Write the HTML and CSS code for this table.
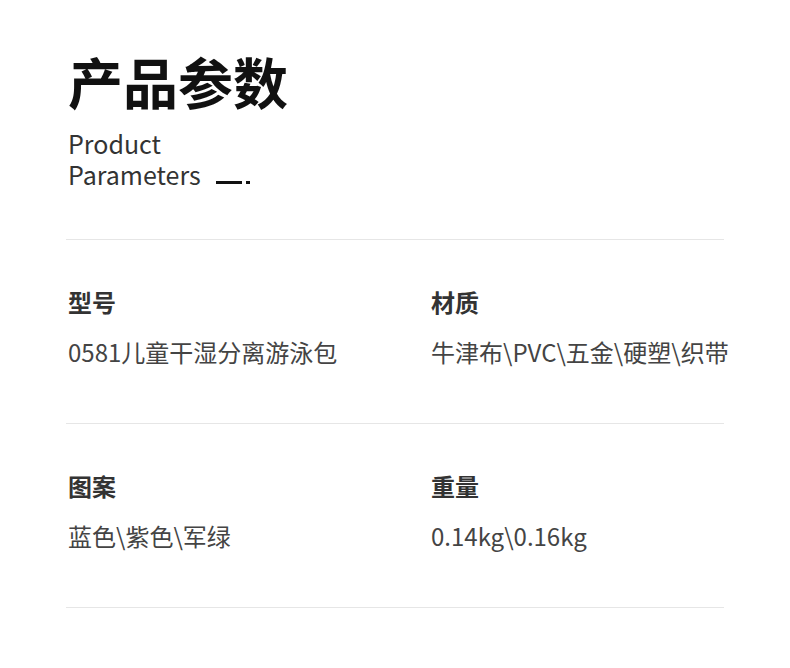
FILE: index.html
```html
<!DOCTYPE html>
<html lang="zh-CN">
<head>
<meta charset="utf-8">
<title>产品参数</title>
<link rel="stylesheet" href="styles.css">
</head>
<body>
<div class="page">
  <header class="head">
    <h1 class="title">产品参数</h1>
    <p class="subtitle"><span class="sub-line">Product</span><span class="sub-line">Parameters<span class="mark-dash"></span><span class="mark-dot"></span></span></p>
  </header>
  <section class="params">
    <div class="row">
      <div class="cell">
        <div class="label">型号</div>
        <div class="value">0581儿童干湿分离游泳包</div>
      </div>
      <div class="cell">
        <div class="label">材质</div>
        <div class="value">牛津布\PVC\五金\硬塑\织带</div>
      </div>
    </div>
    <div class="row">
      <div class="cell">
        <div class="label">图案</div>
        <div class="value">蓝色\紫色\军绿</div>
      </div>
      <div class="cell">
        <div class="label">重量</div>
        <div class="value">0.14kg\0.16kg</div>
      </div>
    </div>
  </section>
</div>
</body>
</html>
```

FILE: styles.css
```css
* { box-sizing: border-box; }
html, body { margin: 0; padding: 0; background: #fff; }
body {
  font-family: "Noto Sans CJK SC", "Noto Sans", sans-serif;
  color: #333;
}
.page {
  width: 790px;
  height: 668px;
  padding: 0 66px;
  overflow: hidden;
}
.head {
  padding: 47px 0 49px 2px;
  border-bottom: 1px solid #e6e6e6;
}
.title {
  margin: 0;
  font-size: 55px;
  line-height: 67px;
  font-weight: 700;
  color: #111;
}
.subtitle {
  margin: 14px 0 0;
  font-size: 25px;
  line-height: 31px;
  color: #333;
}
.sub-line {
  display: block;
  height: 31px;
}
.mark-dash {
  display: inline-block;
  width: 26px;
  height: 3px;
  margin-left: 15px;
  background: #111;
  vertical-align: 1px;
}
.mark-dot {
  display: inline-block;
  width: 4px;
  height: 3px;
  margin-left: 4px;
  background: #111;
  vertical-align: 1px;
}
.row {
  display: grid;
  grid-template-columns: 363px 1fr;
  padding: 46px 0 55px 2px;
  border-bottom: 1px solid #e6e6e6;
}
.label {
  font-size: 24px;
  line-height: 32px;
  font-weight: 700;
  color: #333;
}
.value {
  margin-top: 18px;
  font-size: 24px;
  line-height: 32px;
  color: #444;
  white-space: nowrap;
}
```
